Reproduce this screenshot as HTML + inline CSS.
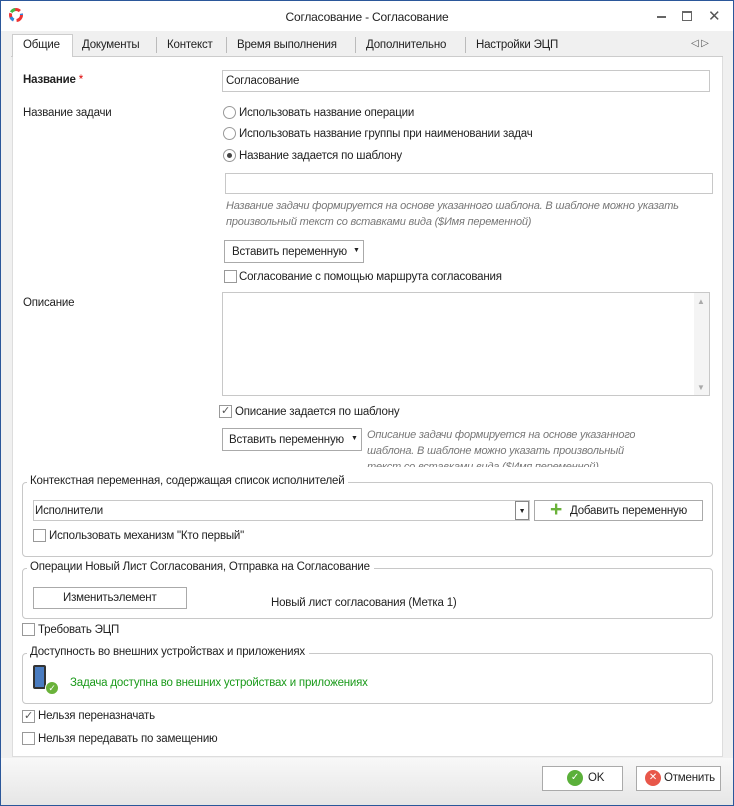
<!DOCTYPE html><html><head><meta charset="utf-8"><style>
*{box-sizing:border-box;margin:0;padding:0}
body{width:734px;height:806px;background:#2b579a;font-family:"Liberation Sans",sans-serif;font-size:11.5px;color:#222;position:relative;overflow:hidden;letter-spacing:-0.2px}
.win{position:absolute;left:1px;top:1px;width:732px;height:804px;background:#f0f0f0}
.a{position:absolute;white-space:nowrap}
.title{position:absolute;left:0;top:0;width:732px;height:30px;background:#fff}
.inp{position:absolute;background:#fff;border:1px solid #c8c8c8}
.rad{position:absolute;width:13px;height:13px;border:1px solid #999;border-radius:50%;background:#fff}
.chk{position:absolute;width:13px;height:13px;border:1px solid #999;background:#fff;font-size:11px;line-height:11px;text-align:center;color:#555}
.btn{position:absolute;background:#fff;border:1px solid #aaa;text-align:center}
.it{position:absolute;font-style:italic;color:#777;font-size:11px;line-height:16px}
.grp{position:absolute;border:1px solid #c8c8c8;border-radius:4px}
.lg{position:absolute;background:#fff;padding:0 4px 0 3px;top:-8px;left:4px}
</style></head><body><div class="win">
<div class="title">
<svg class="a" style="left:7px;top:6px" width="16" height="16" viewBox="0 0 16 16"><circle cx="8" cy="8" r="5.5" fill="none" stroke="#e33" stroke-width="3" stroke-dasharray="8 3"/><circle cx="8" cy="8" r="5.5" fill="none" stroke="#2a8ae0" stroke-width="3" stroke-dasharray="4 18" stroke-dashoffset="-11"/><circle cx="8" cy="8" r="5.5" fill="none" stroke="#4b4" stroke-width="3" stroke-dasharray="5 30" stroke-dashoffset="-20"/></svg>
<div class="a" style="left:0;width:732px;text-align:center;top:9px;font-size:12px">Согласование - Согласование</div>
<div class="a" style="left:656px;top:15px;width:9px;height:2px;background:#666"></div>
<div class="a" style="left:681px;top:10px;width:10px;height:10px;border:1px solid #666;border-top-width:2px"></div>
<div class="a" style="left:707px;top:6px;font-size:15px;color:#555">✕</div>
</div>
<div class="a" style="left:10px;top:32px;width:712px;height:24px;border-bottom:1px solid #ccc"></div>
<div class="a" style="left:11px;top:33px;width:61px;height:24px;background:#fff;border:1px solid #ccc;border-bottom:none"></div>
<div class="a" style="left:22px;top:38px">Общие</div>
<div class="a" style="left:81px;top:38px">Документы</div>
<div class="a" style="left:155px;top:36px;width:1px;height:16px;background:#bbb"></div>
<div class="a" style="left:166px;top:38px">Контекст</div>
<div class="a" style="left:225px;top:36px;width:1px;height:16px;background:#bbb"></div>
<div class="a" style="left:236px;top:38px">Время выполнения</div>
<div class="a" style="left:354px;top:36px;width:1px;height:16px;background:#bbb"></div>
<div class="a" style="left:365px;top:38px">Дополнительно</div>
<div class="a" style="left:464px;top:36px;width:1px;height:16px;background:#bbb"></div>
<div class="a" style="left:475px;top:38px">Настройки ЭЦП</div>
<div class="a" style="left:690px;top:37px;font-size:10px;color:#555">◁ ▷</div>
<div class="a" style="left:11px;top:56px;width:711px;height:700px;background:#fff;border:1px solid #ddd;border-top:none"></div>
<div class="a" style="left:22px;top:73px;font-weight:bold">Название <span style="color:#d00;font-weight:normal">*</span></div>
<div class="inp" style="left:221px;top:69px;width:488px;height:22px"></div>
<div class="a" style="left:225px;top:74px">Согласование</div>
<div class="a" style="left:22px;top:106px">Название задачи</div>
<div class="rad" style="left:222px;top:105px"></div><div class="a" style="left:238px;top:106px">Использовать название операции</div>
<div class="rad" style="left:222px;top:126px"></div><div class="a" style="left:238px;top:127px">Использовать название группы при наименовании задач</div>
<div class="rad" style="left:222px;top:148px"><div style="width:5px;height:5px;border-radius:50%;background:#444;margin:3px"></div></div><div class="a" style="left:238px;top:149px">Название задается по шаблону</div>
<div class="inp" style="left:224px;top:172px;width:488px;height:21px"></div>
<div class="it" style="left:225px;top:197px">Название задачи формируется на основе указанного шаблона. В шаблоне можно указать<br>произвольный текст со вставками вида ($Имя переменной)</div>
<div class="btn" style="left:223px;top:239px;width:140px;height:23px"></div>
<div class="a" style="left:231px;top:245px">Вставить переменную</div><div class="a" style="left:352px;top:246px;font-size:7px">▼</div>
<div class="chk" style="left:223px;top:269px"></div><div class="a" style="left:238px;top:270px">Согласование с помощью маршрута согласования</div>
<div class="a" style="left:22px;top:296px">Описание</div>
<div class="inp" style="left:221px;top:291px;width:488px;height:104px"></div>
<div class="a" style="left:693px;top:292px;width:15px;height:102px;background:#f4f4f4"></div>
<div class="a" style="left:696px;top:296px;font-size:8px;color:#aaa">▲</div><div class="a" style="left:696px;top:382px;font-size:8px;color:#aaa">▼</div>
<div class="chk" style="left:218px;top:404px">✓</div><div class="a" style="left:234px;top:405px">Описание задается по шаблону</div>
<div class="btn" style="left:221px;top:427px;width:140px;height:23px"></div>
<div class="a" style="left:228px;top:433px">Вставить переменную</div><div class="a" style="left:350px;top:434px;font-size:7px">▼</div>
<div class="a" style="left:366px;top:426px;height:40px;overflow:hidden"><div class="it" style="position:static">Описание задачи формируется на основе указанного<br>шаблона. В шаблоне можно указать произвольный<br>текст со вставками вида ($Имя переменной)</div></div>
<div class="grp" style="left:21px;top:481px;width:691px;height:75px"><div class="lg">Контекстная переменная, содержащая список исполнителей</div></div>
<div class="inp" style="left:32px;top:499px;width:497px;height:21px"></div>
<div class="a" style="left:34px;top:504px">Исполнители</div>
<div class="a" style="left:514px;top:500px;width:14px;height:19px;border:1px solid #888;font-size:7px;text-align:center;line-height:19px">▼</div>
<div class="btn" style="left:533px;top:499px;width:169px;height:21px"></div>
<div class="a" style="left:549px;top:499px;color:#6ab23a;font-size:21px;font-weight:bold;line-height:20px">+</div>
<div class="a" style="left:569px;top:504px">Добавить переменную</div>
<div class="chk" style="left:32px;top:528px"></div><div class="a" style="left:48px;top:529px">Использовать механизм "Кто первый"</div>
<div class="grp" style="left:21px;top:567px;width:691px;height:51px"><div class="lg">Операции Новый Лист Согласования, Отправка на Согласование</div></div>
<div class="btn" style="left:32px;top:586px;width:154px;height:22px"></div>
<div class="a" style="left:62px;top:591px">Изменитьэлемент</div>
<div class="a" style="left:270px;top:596px">Новый лист согласования (Метка 1)</div>
<div class="chk" style="left:21px;top:622px"></div><div class="a" style="left:37px;top:623px">Требовать ЭЦП</div>
<div class="grp" style="left:21px;top:652px;width:691px;height:51px"><div class="lg">Доступность во внешних устройствах и приложениях</div></div>
<div class="a" style="left:32px;top:664px;width:13px;height:24px;background:#4a7cc0;border:2px solid #333;border-radius:2px"></div>
<div class="a" style="left:44px;top:680px;width:14px;height:14px;border-radius:50%;background:#6ab23a;border:1px solid #fff;color:#fff;font-size:9px;text-align:center;line-height:12px">✓</div>
<div class="a" style="left:69px;top:676px;color:#1a9a1a">Задача доступна во внешних устройствах и приложениях</div>
<div class="chk" style="left:21px;top:709px">✓</div><div class="a" style="left:37px;top:709px">Нельзя переназначать</div>
<div class="chk" style="left:21px;top:731px"></div><div class="a" style="left:37px;top:732px">Нельзя передавать по замещению</div>
<div class="a" style="left:0;top:757px;width:732px;height:47px;background:linear-gradient(#f8f8f8,#e6e6e6)"></div>
<div class="btn" style="left:541px;top:765px;width:81px;height:25px"></div>
<div class="a" style="left:566px;top:769px;width:16px;height:16px;border-radius:50%;background:#5bb03a;color:#fff;font-size:10px;text-align:center;line-height:16px">✓</div>
<div class="a" style="left:587px;top:771px">OK</div>
<div class="btn" style="left:635px;top:765px;width:85px;height:25px"></div>
<div class="a" style="left:644px;top:769px;width:16px;height:16px;border-radius:50%;background:#e8574a;color:#fff;font-size:10px;text-align:center;line-height:16px">✕</div>
<div class="a" style="left:663px;top:771px">Отменить</div>
</div></body></html>
